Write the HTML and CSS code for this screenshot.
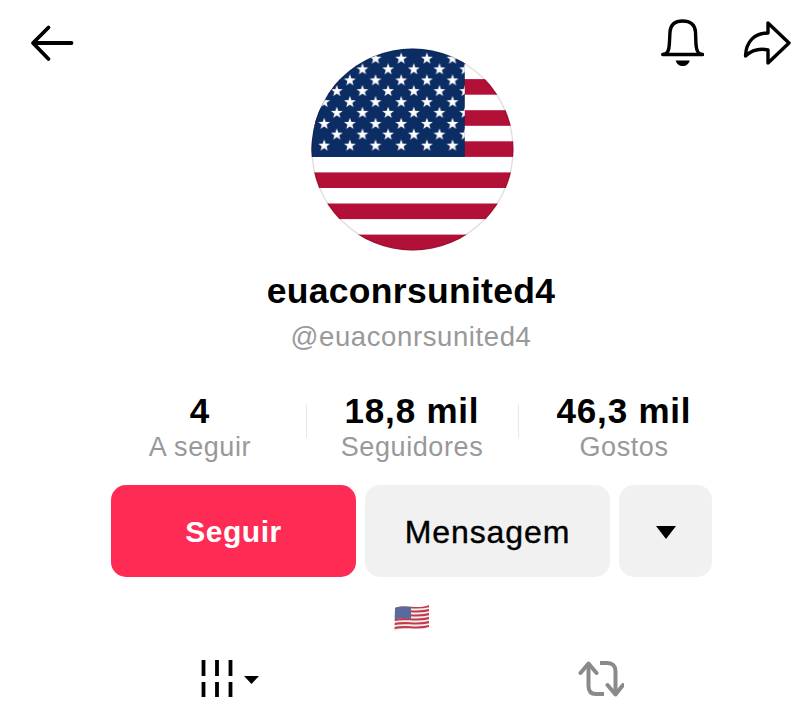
FILE: index.html
```html
<!DOCTYPE html>
<html lang="pt">
<head>
<meta charset="utf-8">
<title>euaconrsunited4</title>
<link rel="stylesheet" href="styles.css">
</head>
<body>
<main class="page">
  <header class="top">
    <svg class="icon-back" width="48" height="40" viewBox="0 0 48 40" aria-hidden="true">
      <path d="M43.500 20H5.500M20.500 4.500L5 20L20.500 36" fill="none" stroke="#000" stroke-width="3.800" stroke-linecap="round" stroke-linejoin="round"/>
    </svg>
    <div class="avatar">
      <svg width="203" height="203" viewBox="0 0 203 203" aria-hidden="true">
        <defs>
          <clipPath id="circle"><circle cx="101.500" cy="101.500" r="101"/></clipPath>
          <polygon id="star" points="0,-6.200 1.480,-2 5.900,-1.920 2.400,0.780 3.640,5 0,2.520 -3.640,5 -2.400,0.780 -5.900,-1.920 -1.480,-2" fill="#fff"/>
          <pattern id="starsA" x="0.370" y="-0.170" width="25.670" height="21.740" patternUnits="userSpaceOnUse">
            <use href="#star" x="12.830" y="10.870"/>
          </pattern>
          <pattern id="starsB" x="12.970" y="10.530" width="25.670" height="21.740" patternUnits="userSpaceOnUse">
            <use href="#star" x="12.830" y="10.870"/>
          </pattern>
        </defs>
        <g clip-path="url(#circle)">
          <rect width="203" height="203" fill="#fff"/>
          <rect x="150" y="0" width="53" height="15.800" fill="#b31038"/>
          <rect y="31.100" width="203" height="15.600" fill="#b31038"/>
          <rect y="62.200" width="203" height="15.600" fill="#b31038"/>
          <rect y="93.300" width="203" height="15.600" fill="#b31038"/>
          <rect y="124.400" width="203" height="15.600" fill="#b31038"/>
          <rect y="155.500" width="203" height="15.600" fill="#b31038"/>
          <rect y="186.600" width="203" height="16.400" fill="#b31038"/>
          <rect width="153.800" height="109" fill="#0c2d63"/>
          <rect width="153.800" height="109" fill="url(#starsA)"/>
          <rect x="13" y="10.500" width="140.800" height="87.500" fill="url(#starsB)"/>
        </g>
        <circle cx="101.500" cy="101.500" r="100.500" fill="none" stroke="#000" stroke-opacity=".13" stroke-width="1.400"/>
      </svg>
    </div>
    <div class="top-actions">
      <svg width="44" height="50" viewBox="0 0 44 50" aria-hidden="true">
        <path d="M2.700 36.500C7.500 36 8.800 33 9.300 27L10 14C10.500 6.500 15.500 3 22.700 3C29.900 3 35 6.500 35.500 14L36 27C36.500 33 37.900 36 42.700 36.500Z" fill="none" stroke="#000" stroke-width="3.400" stroke-linejoin="round"/>
        <path d="M15.700 42.500H29.700C28.900 46 26.200 48 22.700 48C19.200 48 16.500 46 15.700 42.500Z" fill="#000"/>
      </svg>
      <svg width="50" height="48" viewBox="0 0 50 48" aria-hidden="true">
        <path d="M26 5V15C13 15 4 23 3.500 38C10 32 17 30 26 32V45L47 25Z" fill="none" stroke="#000" stroke-width="3.400" stroke-linejoin="round"/>
      </svg>
    </div>
  </header>

  <h1 class="name">euaconrsunited4</h1>
  <p class="handle">@euaconrsunited4</p>

  <section class="stats">
    <div class="stat">
      <strong class="stat-value">4</strong>
      <span class="stat-label">A seguir</span>
    </div>
    <div class="stat stat-divided">
      <strong class="stat-value">18,8 mil</strong>
      <span class="stat-label">Seguidores</span>
    </div>
    <div class="stat stat-divided">
      <strong class="stat-value">46,3 mil</strong>
      <span class="stat-label">Gostos</span>
    </div>
  </section>

  <section class="actions">
    <button class="btn btn-primary" type="button">Seguir</button>
    <button class="btn btn-secondary" type="button">Mensagem</button>
    <button class="btn btn-secondary btn-more" type="button" aria-label="Mais">
      <svg width="22" height="16" viewBox="0 0 22 16" aria-hidden="true"><path d="M1 3H21L11 16Z" fill="#000"/></svg>
    </button>
  </section>

  <div class="bio">
    <svg width="38" height="30" viewBox="0 0 38 30" role="img" aria-label="Bandeira dos EUA">
      <defs>
        <clipPath id="wave"><path d="M2 5C12 1 24 7 36 2L36 24C25 29 12 23 1.500 28Z"/></clipPath>
      </defs>
      <g clip-path="url(#wave)">
        <rect width="38" height="30" fill="#f4f0f0"/>
        <g fill="none" stroke="#c23a4c" stroke-width="2.100">
          <path d="M0 5.500C12 1.500 24 7.500 38 2.500"/>
          <path d="M0 9.500C12 5.500 24 11.500 38 6.500"/>
          <path d="M0 13.500C12 9.500 24 15.500 38 10.500"/>
          <path d="M0 17.500C12 13.500 24 19.500 38 14.500"/>
          <path d="M0 21.500C12 17.500 24 23.500 38 18.500"/>
          <path d="M0 25.500C12 21.500 24 27.500 38 22.500"/>
          <path d="M0 29.500C12 25.500 24 31.500 38 26.500"/>
        </g>
        <path d="M0 0H18V16.500C12 14.500 6 14.500 0 17Z" fill="#5a6a9c"/>
      </g>
    </svg>
  </div>

  <nav class="tabs">
    <div class="tab">
      <svg width="60" height="38" viewBox="0 0 60 38" aria-hidden="true">
        <path d="M3.500 0V16M17 0V16M30.500 0V16M3.500 22V37M17 22V37M30.500 22V37" stroke="#000" stroke-width="3.800"/>
        <path d="M44 16H59L51.500 24Z" fill="#000"/>
      </svg>
    </div>
    <div class="tab">
      <svg width="46" height="38" viewBox="0 0 46 38" aria-hidden="true">
        <g fill="none" stroke="#8a8a8a" stroke-width="4" stroke-linejoin="round">
          <path d="M2.500 13L10.500 3.500L18.500 13" stroke-linecap="round"/>
          <path d="M10.500 4V26C10.500 31 13 34 18 34H26"/>
          <path d="M22 3H29.500C34.500 3 37.500 6 37.500 11V34"/>
          <path d="M29.500 25L37.500 34.500L45 25" stroke-linecap="round"/>
        </g>
      </svg>
    </div>
  </nav>
</main>
</body>
</html>
```

FILE: styles.css
```css
* { box-sizing: border-box; }

html, body {
  margin: 0;
  padding: 0;
  background: #fff;
}

.page {
  width: 800px;
  height: 713px;
  overflow: hidden;
  font-family: "Liberation Sans", Arial, sans-serif;
  color: #000;
}

.top {
  display: grid;
  grid-template-columns: 310.500px 203px 1fr;
  height: 251px;
  padding-top: 23px;
}

.icon-back { display: block; margin-left: 28px; }

.avatar {
  margin-top: 25px;
  height: 203px;
}
.avatar svg { display: block; }

.top-actions {
  display: flex;
  justify-content: flex-end;
  align-items: flex-start;
  gap: 38px;
  padding-right: 8px;
  margin-top: -5px;
}
.top-actions svg { display: block; }

.name {
  margin: 20px 0 0;
  padding-left: 22px;
  font-size: 35.500px;
  line-height: 40px;
  font-weight: 700;
  letter-spacing: 0.300px;
  text-align: center;
}

.handle {
  margin: 6px 0 0;
  padding-left: 22px;
  font-size: 27.500px;
  line-height: 40px;
  font-weight: 400;
  letter-spacing: 0.600px;
  color: #999;
  text-align: center;
}

.stats {
  display: grid;
  grid-template-columns: repeat(3, 212px);
  margin-top: 34px;
  padding-left: 94px;
}

.stat {
  position: relative;
  display: flex;
  flex-direction: column;
  align-items: center;
}

.stat-divided::before {
  content: "";
  position: absolute;
  left: 0;
  top: 13px;
  height: 34px;
  width: 1px;
  background: #e8e8e8;
}

.stat-value {
  font-size: 35px;
  line-height: 40px;
  font-weight: 700;
  letter-spacing: 0.800px;
}

.stat-label {
  font-size: 27px;
  line-height: 32px;
  letter-spacing: 0.600px;
  color: #999;
}

.actions {
  display: flex;
  gap: 9px;
  margin-top: 22px;
  padding-left: 111px;
}

.btn {
  height: 92px;
  width: 245px;
  border: 0;
  border-radius: 15px;
  padding: 2px 0 0;
  font-family: inherit;
  font-size: 30px;
  letter-spacing: 0.500px;
  display: flex;
  align-items: center;
  justify-content: center;
}

.btn-primary {
  background: #fe2c55;
  color: #fff;
  font-weight: 700;
}

.btn-secondary {
  background: #f1f1f2;
  color: #000;
  font-size: 32px;
  letter-spacing: 0.900px;
  -webkit-text-stroke: 0.400px #000;
}

.btn-more { width: 93px; padding: 0; }

.bio {
  display: flex;
  justify-content: center;
  margin-top: 26px;
  padding-left: 24px;
  height: 30px;
}

.tabs {
  display: grid;
  grid-template-columns: repeat(2, 371px);
  margin-top: 27px;
  padding-left: 44px;
}

.tab {
  display: flex;
  justify-content: center;
}
```
